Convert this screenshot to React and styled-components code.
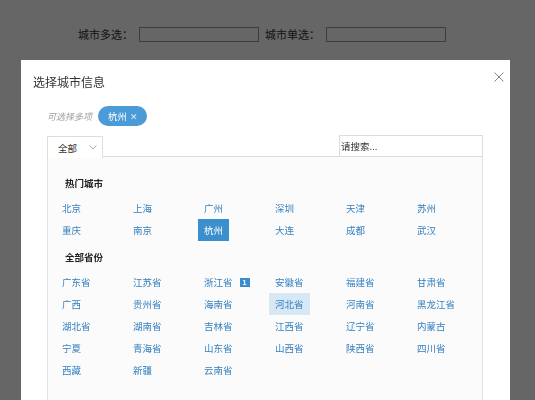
import React from 'react'
import styled, { createGlobalStyle } from 'styled-components'

const GlobalStyle = createGlobalStyle`
  html, body {
    margin: 0;
    padding: 0;
    background: #fff;
    font-family: "Noto Sans CJK SC", "Noto Sans", sans-serif;
    color: #333;
    overflow: hidden;
  }
`

const hotCities = ['北京', '上海', '广州', '深圳', '天津', '苏州', '重庆', '南京', '杭州', '大连', '成都', '武汉']

const provinces = [
  '广东省', '江苏省', '浙江省', '安徽省', '福建省', '甘肃省',
  '广西', '贵州省', '海南省', '河北省', '河南省', '黑龙江省',
  '湖北省', '湖南省', '吉林省', '江西省', '辽宁省', '内蒙古',
  '宁夏', '青海省', '山东省', '山西省', '陕西省', '四川省',
  '西藏', '新疆', '云南省',
]

const Page = styled.div`
  height: 400px;
`

const FormRow = styled.div`
  display: flex;
  align-items: center;
  padding: 27px 0 0 78px;
`

const Label = styled.span`
  font-size: 11px;
  line-height: 15px;
  margin-right: 6px;
`

const TextInput = styled.input`
  box-sizing: border-box;
  width: 120px;
  height: 15px;
  border: 1px solid #999;
  margin-right: ${(p) => p.gap || 0}px;
  padding: 0;
`

const Overlay = styled.div`
  position: fixed;
  inset: 0;
  background: rgba(0, 0, 0, 0.6);
`

const Modal = styled.div`
  position: fixed;
  left: 21px;
  top: 60px;
  width: 489px;
  height: 360px;
  background: #fff;
`

const ModalTitle = styled.h3`
  margin: 0;
  padding: 12px 12px 0;
  font-size: 12px;
  line-height: 20px;
  font-weight: normal;
  color: #333;
`

const CloseButton = styled.button`
  position: absolute;
  top: 12px;
  right: 6px;
  width: 10px;
  height: 10px;
  padding: 0;
  border: 0;
  background: none;
  display: flex;
`

const Body = styled.div`
  padding: 14px 27px 0 26px;
`

const PickedRow = styled.div`
  display: flex;
  align-items: center;
  gap: 6px;
  height: 20px;
`

const Hint = styled.span`
  font-size: 9px;
  font-style: italic;
  color: #a0a0a0;
`

const Tag = styled.span`
  display: inline-flex;
  align-items: center;
  gap: 3px;
  height: 20px;
  padding: 0 9px 0 10px;
  border-radius: 10px;
  background: #4b9bd8;
  color: #fff;
  font-size: 9.5px;
`

const TagClose = styled.span`
  font-size: 9px;
  opacity: 0.8;
`

const Toolbar = styled.div`
  display: flex;
  justify-content: space-between;
  align-items: flex-end;
  margin-top: 9px;
`

const Tab = styled.div`
  box-sizing: border-box;
  display: flex;
  align-items: center;
  gap: 12px;
  width: 56px;
  height: 22px;
  padding-left: 10px;
  border: 1px solid #ddd;
  border-bottom: 0;
  background: #fff;
  font-size: 9.5px;
  color: #333;
  margin-bottom: -1px;
  position: relative;
  z-index: 1;
`

const Search = styled.input`
  box-sizing: border-box;
  width: 144px;
  height: 22px;
  border: 1px solid #ddd;
  padding: 0 1px;
  font-size: 9.5px;
  font-family: inherit;
  color: #333;
  outline: none;
  &::placeholder {
    color: #333;
  }
`

const Panel = styled.div`
  border: 1px solid #e2e2e2;
  border-top-color: #ddd;
  margin-top: -1px;
  background: #fbfbfb;
  height: 300px;
  padding: 15px 0 0 8px;
`

const SectionTitle = styled.div`
  font-size: 9.5px;
  font-weight: bold;
  line-height: 22px;
  color: #222;
  padding-left: 9px;
  margin: ${(p) => (p.first ? '0' : '5px')} 0 3px;
`

const CityGrid = styled.div`
  display: grid;
  grid-template-columns: repeat(6, 71px);
  grid-auto-rows: 22px;
`

const CityItem = styled.div`
  display: flex;
  align-items: center;
  gap: 4px;
`

const City = styled.span`
  display: inline-block;
  height: 22px;
  line-height: 22px;
  padding: 0 6px;
  font-size: 9.5px;
  color: ${(p) => (p.selected ? '#fff' : '#3580c0')};
  background: ${(p) => (p.selected ? '#3b8fcc' : p.hover ? '#d7e8f4' : 'transparent')};
`

const Badge = styled.span`
  display: inline-flex;
  align-items: center;
  justify-content: center;
  width: 10px;
  height: 9px;
  margin-left: -3px;
  background: #3a8ccf;
  color: #fff;
  font-size: 7px;
  font-weight: bold;
  font-family: "Liberation Sans", sans-serif;
`

const App = () => (
  <Page>
    <GlobalStyle />
    <FormRow>
      <Label>城市多选：</Label>
      <TextInput gap={6} />
      <Label>城市单选：</Label>
      <TextInput />
    </FormRow>
    <Overlay />
    <Modal>
      <ModalTitle>选择城市信息</ModalTitle>
      <CloseButton aria-label="关闭">
        <svg width="10" height="10" viewBox="0 0 10 10">
          <path d="M0.5 0.5 L9.5 9.5 M9.5 0.5 L0.5 9.5" stroke="#888" strokeWidth="1" fill="none" />
        </svg>
      </CloseButton>
      <Body>
        <PickedRow>
          <Hint>可选择多项</Hint>
          <Tag>
            杭州 <TagClose>✕</TagClose>
          </Tag>
        </PickedRow>
        <Toolbar>
          <Tab>
            全部
            <svg width="8" height="5" viewBox="0 0 8 5">
              <polyline points="0.5,0.5 4,4 7.5,0.5" stroke="#aaa" strokeWidth="1" fill="none" />
            </svg>
          </Tab>
          <Search placeholder="请搜索..." />
        </Toolbar>
        <Panel>
          <SectionTitle first>热门城市</SectionTitle>
          <CityGrid>
            {hotCities.map((c) => (
              <CityItem key={c}>
                <City selected={c === '杭州'}>{c}</City>
              </CityItem>
            ))}
          </CityGrid>
          <SectionTitle>全部省份</SectionTitle>
          <CityGrid>
            {provinces.map((p) => (
              <CityItem key={p}>
                <City hover={p === '河北省'}>{p}</City>
                {p === '浙江省' && <Badge>1</Badge>}
              </CityItem>
            ))}
          </CityGrid>
        </Panel>
      </Body>
    </Modal>
  </Page>
)

export default App
